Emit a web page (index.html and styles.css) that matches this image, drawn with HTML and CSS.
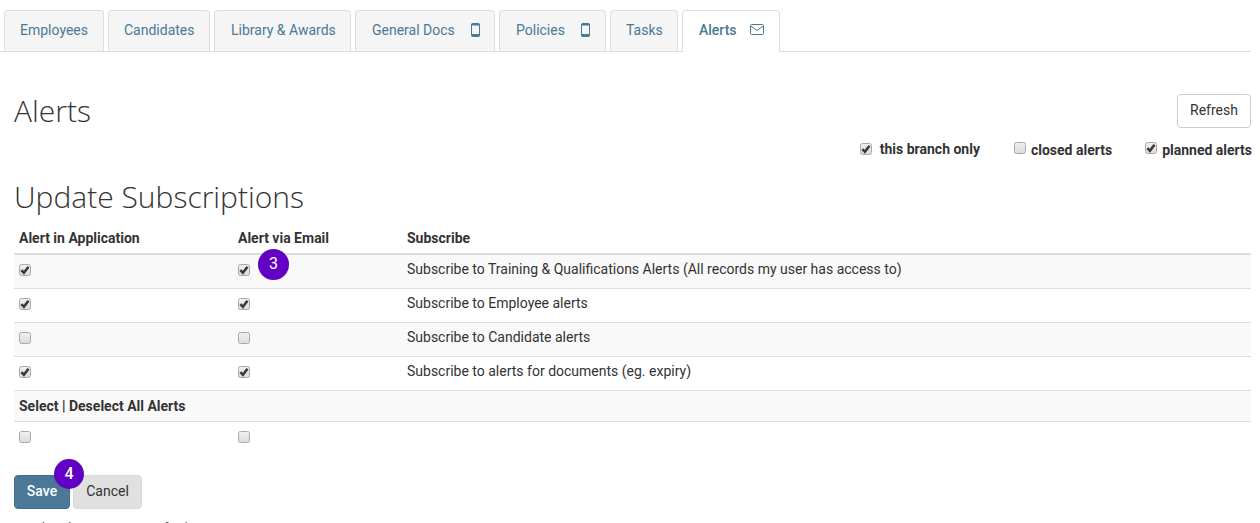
FILE: index.html
```html
<!DOCTYPE html>
<html lang="en">
<head>
<meta charset="utf-8">
<title>Alerts</title>
<link rel="stylesheet" href="styles.css">
</head>
<body>
<nav class="tabs">
  <a class="tab">Employees</a>
  <a class="tab">Candidates</a>
  <a class="tab wide">Library &amp; Awards</a>
  <a class="tab wide">General Docs <svg class="ico phone" viewBox="0 0 9 14"><rect x="0.5" y="0.5" width="8" height="13" rx="1.5" fill="none" stroke="#4a7896"/><rect x="0.5" y="0.5" width="8" height="2" fill="#4a7896"/><rect x="0.5" y="11" width="8" height="2.5" fill="#4a7896"/></svg></a>
  <a class="tab wide">Policies <svg class="ico phone" viewBox="0 0 9 14"><rect x="0.5" y="0.5" width="8" height="13" rx="1.5" fill="none" stroke="#4a7896"/><rect x="0.5" y="0.5" width="8" height="2" fill="#4a7896"/><rect x="0.5" y="11" width="8" height="2.5" fill="#4a7896"/></svg></a>
  <a class="tab">Tasks</a>
  <a class="tab active">Alerts <svg class="ico mail" viewBox="0 0 14 11"><rect x="0.5" y="0.5" width="13" height="10" rx="1" fill="none" stroke="#4a7896"/><path d="M0.7 2 L7 6.5 L13.3 2" fill="none" stroke="#4a7896"/></svg></a>
</nav>

<main class="page">
  <div class="head">
    <h1>Alerts</h1>
    <button class="btn refresh">Refresh</button>
  </div>
  <div class="filters">
    <label class="f f1"><input type="checkbox" checked>this branch only</label>
    <label class="f f2"><input type="checkbox">closed alerts</label>
    <label class="f f3"><input type="checkbox" checked>planned alerts</label>
  </div>
  <h2>Update Subscriptions</h2>
  <div class="grid">
    <div class="row hdr"><span>Alert in Application</span><span>Alert via Email</span><span>Subscribe</span></div>
    <div class="row odd first"><span class="cb"><input type="checkbox" checked></span><span class="cb mark-cell"><input type="checkbox" checked><i class="badge b3">3</i></span><span>Subscribe to Training &amp; Qualifications Alerts (All records my user has access to)</span></div>
    <div class="row"><span class="cb"><input type="checkbox" checked></span><span class="cb"><input type="checkbox" checked></span><span>Subscribe to Employee alerts</span></div>
    <div class="row odd"><span class="cb"><input type="checkbox"></span><span class="cb"><input type="checkbox"></span><span>Subscribe to Candidate alerts</span></div>
    <div class="row"><span class="cb"><input type="checkbox" checked></span><span class="cb"><input type="checkbox" checked></span><span>Subscribe to alerts for documents (eg. expiry)</span></div>
    <div class="row odd sel"><b>Select | Deselect All Alerts</b></div>
    <div class="row last"><span class="cb"><input type="checkbox"></span><span class="cb"><input type="checkbox"></span><span></span></div>
  </div>
  <div class="actions">
    <button class="btn save">Save<i class="badge b4">4</i></button>
    <button class="btn cancel">Cancel</button>
  </div>
  <p class="note">are the alerts sent once for it</p>
</main>
</body>
</html>
```
FILE: styles.css
```css
* { box-sizing: border-box; }
html, body { margin: 0; height: 523px; overflow: hidden; background: #fff; }
body { font: 14px/20px Roboto, "Liberation Sans", sans-serif; color: #333; }

input[type=checkbox] {
  appearance: none;
  width: 12px;
  height: 12px;
  margin: 0;
  flex: none;
  border: 1px solid #a9a9a9;
  border-radius: 2.5px;
  background: linear-gradient(#f0f0f0, #dcdcdc);
}
input[type=checkbox]:checked {
  background: url("data:image/svg+xml,%3Csvg xmlns='http://www.w3.org/2000/svg' viewBox='0 0 10 10'%3E%3Cpath d='M1.4 5.2 L3.9 7.8 L8.5 1.8' fill='none' stroke='%23383838' stroke-width='2.5'/%3E%3C/svg%3E") center / 10px 10px no-repeat, linear-gradient(#f0f0f0, #dcdcdc);
}

.tabs { display: grid; grid-template-columns: 100px 102px 137px 140px 107px 68px 98px; gap: 4px; height: 52px; padding: 10px 0 0 4px; border-bottom: 1px solid #ddd; margin-right: 9px; }
.tab { display: flex; align-items: center; height: 41px; padding: 0 0 2px 15px; color: #4a7896; background: #f5f5f5; border: 1px solid #ddd; border-bottom: 0; border-radius: 4px 4px 0 0; }
.tab.wide { padding-left: 16px; }
.tab.active { background: #fff; font-weight: 500; height: 42px; padding: 0 0 4px 16px; }
.ico { flex: none; margin-left: 16px; }
.phone { width: 9px; height: 14px; }
.mail { width: 14px; height: 11px; margin-left: 13px; }

.page { padding: 0 9px 0 14px; }
.head { display: flex; justify-content: space-between; align-items: flex-start; padding-top: 41px; height: 87px; }
.head .refresh { margin-top: 1px; }
h1 { margin: 0; font: 300 30px/36px "Open Sans", sans-serif; color: #333; }
.btn { font: 14px/20px Roboto, sans-serif; border-radius: 4px; }
.refresh { width: 74px; height: 34px; background: #fff; border: 1px solid #ccc; color: #333; padding: 0 0 2px; }

.filters { display: flex; justify-content: flex-end; height: 40px; font-weight: 700; color: #333; }
.f { display: flex; align-items: center; height: 20px; }
.f1 { margin-right: 34px; }
.f1 input { margin-right: 8px; }
.f2 { margin-right: 33px; padding-top: 1px; }
.f2 input, .f3 input { margin: -3px 5px 0 0; }
.f3 { padding-top: 1px; margin-right: -1px; }

h2 { margin: 0; height: 42px; font: 300 30px/36px "Open Sans", sans-serif; color: #333; }

.row { display: grid; grid-template-columns: 219px 169px 1fr; align-items: center; height: 34px; padding: 0 5px 5px; border-top: 1px solid #ddd; }
.hdr { border-top: 0; border-bottom: 2px solid #ddd; font-weight: 700; padding: 1px 5px 0; }
.row.first { border-top: 0; height: 33px; }
.odd { background: #f9f9f9; }
.sel { display: block; height: 32px; padding: 0 5px; line-height: 30px; border-bottom: 1px solid #ddd; }
.last { border-top: 0; height: 33px; }
.cb { display: flex; align-items: center; height: 20px; padding-top: 2px; }
.mark-cell { position: relative; }

.badge { position: absolute; display: block; width: 31px; height: 31px; border-radius: 50%; background: #6200c4; color: #fff; font: 16px/29px Roboto, sans-serif; text-align: center; }
.b3 { left: 20px; top: -10px; }
.b4 { left: 39px; top: -17px; width: 30px; height: 30px; font-weight: 500; }

.actions { display: flex; gap: 3px; margin-top: 20px; }
.save { position: relative; width: 56px; height: 34px; background: #4a7896; border: 1px solid #41708d; color: #fff; font-weight: 500; padding: 0 0 2px; }
.cancel { width: 69px; height: 34px; background: #e0e0e0; border: 1px solid #d8d8d8; color: #333; padding: 0 0 2px; }
.note { margin: 9px 0 0; color: #555; }
```
